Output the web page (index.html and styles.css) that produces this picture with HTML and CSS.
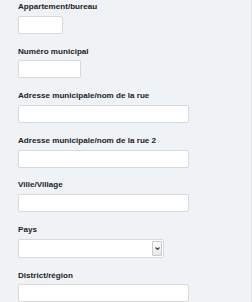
FILE: index.html
```html
<!DOCTYPE html>
<html lang="fr">
  <head>
    <meta charset="UTF-8" />
    <meta name="viewport" content="width=device-width, initial-scale=1.0" />
    <title>Adresse</title>
    <link rel="stylesheet" href="styles.css">
  </head>
  <body>
    <form class="adresse">
      <div class="champ">
        <label for="app">Appartement/bureau</label>
        <input type="text" id="app" class="court" />
      </div>
      <div class="champ">
        <label for="num">Numéro municipal</label>
        <input type="text" id="num" class="moyen" />
      </div>
      <div class="champ">
        <label for="rue">Adresse municipale/nom de la rue</label>
        <input type="text" id="rue" class="long" />
      </div>
      <div class="champ">
        <label for="rue2">Adresse municipale/nom de la rue 2</label>
        <input type="text" id="rue2" class="long" />
      </div>
      <div class="champ">
        <label for="ville">Ville/Village</label>
        <input type="text" id="ville" class="long" />
      </div>
      <div class="champ">
        <label for="pays">Pays</label>
        <div class="liste">
          <select id="pays">
            <option></option>
          </select>
          <span class="fleche">
            <svg width="5" height="3" viewBox="0 0 5 3"><path d="M0.5 0.5 L2.5 2.5 L4.5 0.5" fill="none" stroke="#444" stroke-width="1.2"/></svg>
          </span>
        </div>
      </div>
      <div class="champ">
        <label for="district">District/région</label>
        <input type="text" id="district" class="long" />
      </div>
    </form>
  </body>
</html>
```

FILE: styles.css
```css
* {
  margin: 0;
  padding: 0;
  box-sizing: border-box;
}

body {
  background-color: #eff3f6;
  font-family: "Liberation Sans", Arial, sans-serif;
  color: #222;
}

.adresse {
  min-height: 302px;
  padding: 2px 0 0 18px;
  border-right: 1px solid #dfe3e6;
}

.champ {
  margin-bottom: 12.8px;
}

label {
  display: block;
  font-size: 8.1px;
  font-weight: 700;
  line-height: 10px;
  margin-bottom: 3.8px;
}

input {
  display: block;
  height: 18px;
  background-color: #fff;
  border: 1px solid #d6dadd;
  border-radius: 2px;
}

.court {
  width: 45px;
}
.moyen {
  width: 63px;
}
.long {
  width: 171px;
}

.liste {
  display: flex;
  width: 146px;
  height: 19px;
  background-color: #fff;
  border: 1px solid #d6dadd;
  border-radius: 2px;
}

.liste select {
  flex: 1;
  appearance: none;
  border: none;
  background: transparent;
  font-size: 8px;
}

.fleche {
  display: flex;
  align-items: center;
  justify-content: center;
  width: 10px;
  margin: 1px;
  border: 1px solid #c8cbce;
  border-radius: 1px;
  background: linear-gradient(#fbfbfb, #e8e8e8);
}
```
